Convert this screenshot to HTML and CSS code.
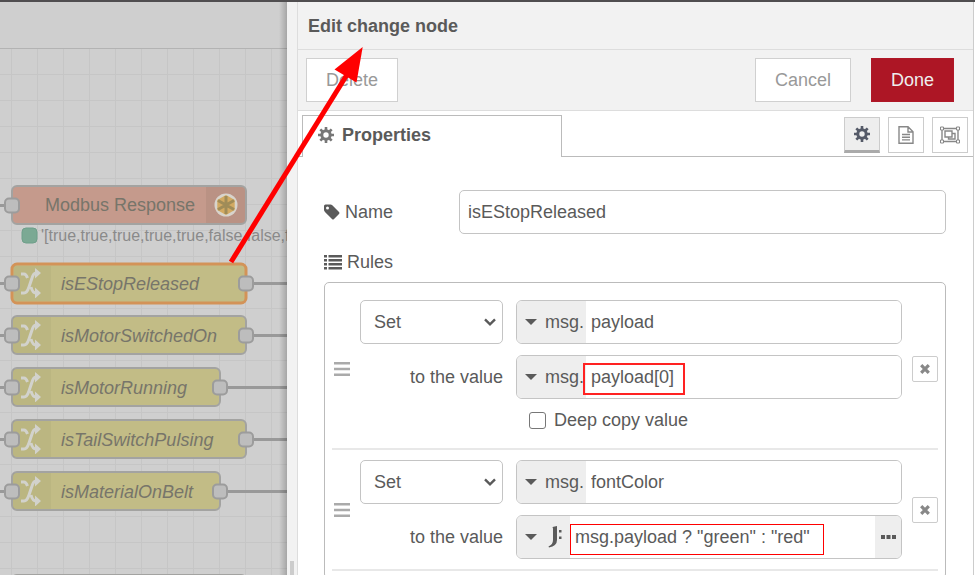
FILE: index.html
```html
<!DOCTYPE html>
<html lang="en">
<head>
<meta charset="utf-8">
<title>Edit change node</title>
<link rel="stylesheet" href="styles.css">
</head>
<body>
<svg class="symbols" aria-hidden="true">
  <defs>
    <symbol id="gear" viewBox="0 0 16 16">
      <path fill="none" stroke="currentColor" stroke-width="3" d="M8 3.8a4.2 4.2 0 1 0 0 8.400a4.200 4.200 0 1 0 0-8.400z"/>
      <path fill="none" stroke="currentColor" stroke-width="2.600" d="M8 0v3M8 13v3M0 8h3M13 8h3M2.300 2.300l2.200 2.200M11.500 11.500l2.200 2.200M2.300 13.700l2.200-2.200M11.500 4.500l2.200-2.200"/>
    </symbol>
    <symbol id="tag" viewBox="0 0 16 16">
      <path fill="currentColor" fill-rule="evenodd" d="M0 2Q0 .5 1.500 .5H6.500Q7.500.5 8.300 1.300L15 8Q16 9 15 10L10 15Q9 16 8 15L1.200 8.300Q0 7 0 6zM3.500 2.500a1.500 1.500 0 1 0 0 3a1.500 1.500 0 1 0 0-3z"/>
    </symbol>
    <symbol id="list" viewBox="0 0 18 16">
      <path fill="currentColor" d="M0 1h3v2.400H0zM4.500 1H18v2.400H4.500zM0 5h3v2.400H0zM4.500 5H18v2.400H4.500zM0 9h3v2.400H0zM4.500 9H18v2.400H4.500zM0 13h3v2.400H0zM4.500 13H18v2.400H4.500z"/>
    </symbol>
    <symbol id="doc" viewBox="0 0 16 18">
      <path fill="none" stroke="currentColor" stroke-width="1.400" d="M1 .8H10L15 5.800V17.200H1zM10 1v5h5M4 8.500h8M4 11.200h8M4 13.900h8"/>
    </symbol>
    <symbol id="group" viewBox="0 0 20 18">
      <path fill="none" stroke="currentColor" stroke-width="1.400" d="M2 2.500H18V15.500H2zM5 5h7v6H5zM12 7.500h3v5.500H8.500V11"/>
      <path fill="#fff" stroke="currentColor" d="M.5 1h3v3h-3zM16.500 1h3v3h-3zM.5 14h3v3h-3zM16.500 14h3v3h-3z"/>
    </symbol>
    <symbol id="chevron" viewBox="0 0 12 8">
      <path fill="none" stroke="currentColor" stroke-width="2.400" d="M1 1.300L6 6.300L11 1.300"/>
    </symbol>
    <symbol id="caret" viewBox="0 0 12 6"><path fill="currentColor" d="M0 0H12L6 6z"/></symbol>
    <symbol id="grip" viewBox="0 0 16 14">
      <path fill="currentColor" d="M0 0h16v2.500H0zM0 5.700h16v2.500H0zM0 11.400h16v2.500H0z"/>
    </symbol>
    <symbol id="cross" viewBox="0 0 10 10">
      <path stroke="currentColor" stroke-width="3.200" d="M1.200 1.200L8.800 8.800M8.800 1.200L1.200 8.800"/>
    </symbol>
    <symbol id="jsonata" viewBox="0 0 14 22">
      <path fill="currentColor" d="M4.500 1L9 0V14Q9 20 1 21.500L.5 20.500Q5 18.500 5 14V2.500zM11 4h2.500v2.500H11zM11 10.500h2.500v2.500H11z"/>
    </symbol>
    <symbol id="dots" viewBox="0 0 15 4">
      <path fill="currentColor" d="M0 0h4v4H0zM5.500 0h4v4h-4zM11 0h4v4h-4z"/>
    </symbol>
    <symbol id="shuffle" viewBox="0 0 20 30">
      <path fill="none" stroke="currentColor" stroke-width="3" d="M0 6H3Q5 6 6.500 10M0 25H3Q6 25 8 19L11 10Q12.500 5 15 5M10 19Q11.500 25 15 25"/>
      <path fill="currentColor" d="M14 0L20 5L14 10.500zM14 19.500L20 25L14 30.500z"/>
    </symbol>
  </defs>
</svg>

<div class="app">
  <header class="topbar"></header>
  <main class="main">
    <section class="workspace" aria-label="Flow">
      <div class="flow-tabs"></div>
      <svg class="flow" width="287" height="526" viewBox="0 49 287 526">
        <defs>
          <pattern id="grid" x="11" y="48" width="26" height="26" patternUnits="userSpaceOnUse">
            <path class="gridline" d="M0 .5H26M.5 0V26"/>
          </pattern>
        </defs>
        <rect y="48" width="287" height="527" fill="url(#grid)"/>
        <path class="wire" d="M0 205.500H12M0 283.500H12M0 335.500H12M0 387.500H12M0 439.500H12M0 491.500H12M246 283.500H287M246 335.500H287M220 387.500H287M246 439.500H287M220 491.500H287"/>

        <rect class="node modbus" x="12" y="186" width="234" height="38" rx="5"/>
        <path class="shade" d="M206 187H241Q245 187 245 191V219Q245 223 241 223H206z"/>
        <circle cx="226" cy="205" r="11.500" fill="#d8d4cc"/>
        <path d="M226 195L234.700 200V210L226 215L217.300 210V200z" fill="#d3aa62"/>
        <path d="M226 196V214M218 200.500L234 209.500M234 200.500L218 209.500" stroke="#a08c58" stroke-width="3"/>
        <text class="label" x="45" y="211">Modbus Response</text>
        <rect class="port" x="5" y="198.500" width="14" height="14" rx="4"/>
        <rect x="22" y="228" width="15" height="15" rx="4" fill="#7ba994" stroke="#6f9f8a"/>
        <text class="status" x="41" y="241">'[true,true,true,true,true,false,false,fa</text>

        <rect class="node change selected" x="12" y="264" width="234" height="39" rx="5"/>
        <rect class="node change" x="12" y="316" width="234" height="38" rx="5"/>
        <rect class="node change" x="12" y="368" width="208" height="38" rx="5"/>
        <rect class="node change" x="12" y="420" width="234" height="38" rx="5"/>
        <rect class="node change" x="12" y="472" width="208" height="38" rx="5"/>
        <rect class="node" x="12" y="575" width="234" height="38" rx="5"/>
        <path class="iconbg" d="M14 266H51V301H14zM13 317H51V353H13zM13 369H51V405H13zM13 421H51V457H13zM13 473H51V509H13z"/>
        <g class="shuffle">
          <use href="#shuffle" x="21" y="268" width="20" height="30"/>
          <use href="#shuffle" x="21" y="320" width="20" height="30"/>
          <use href="#shuffle" x="21" y="372" width="20" height="30"/>
          <use href="#shuffle" x="21" y="424" width="20" height="30"/>
          <use href="#shuffle" x="21" y="476" width="20" height="30"/>
        </g>
        <g class="label italic">
          <text x="61" y="290">isEStopReleased</text>
          <text x="61" y="342">isMotorSwitchedOn</text>
          <text x="61" y="394">isMotorRunning</text>
          <text x="61" y="446">isTailSwitchPulsing</text>
          <text x="61" y="498">isMaterialOnBelt</text>
        </g>
        <g class="port">
          <rect x="5" y="276.500" width="14" height="14" rx="4"/><rect x="239" y="276.500" width="14" height="14" rx="4"/>
          <rect x="5" y="328.500" width="14" height="14" rx="4"/><rect x="239" y="328.500" width="14" height="14" rx="4"/>
          <rect x="5" y="380.500" width="14" height="14" rx="4"/><rect x="213" y="380.500" width="14" height="14" rx="4"/>
          <rect x="5" y="432.500" width="14" height="14" rx="4"/><rect x="239" y="432.500" width="14" height="14" rx="4"/>
          <rect x="5" y="484.500" width="14" height="14" rx="4"/><rect x="213" y="484.500" width="14" height="14" rx="4"/>
        </g>
      </svg>
    </section>
    <div class="gutter"><span class="gutter-grip"></span></div>

    <section class="tray">
      <h1 class="tray-title">Edit change node</h1>
      <div class="toolbar">
        <button class="btn" type="button">Delete</button>
        <span class="spacer"></span>
        <button class="btn" type="button">Cancel</button>
        <button class="btn primary" type="button">Done</button>
      </div>
      <div class="tabs">
        <div class="tab"><svg class="i16"><use href="#gear"/></svg>Properties</div>
        <div class="tab-tools">
          <button class="tool active" type="button" aria-label="Properties"><svg class="i16"><use href="#gear"/></svg></button>
          <button class="tool" type="button" aria-label="Description"><svg class="i18"><use href="#doc"/></svg></button>
          <button class="tool" type="button" aria-label="Appearance"><svg class="i20"><use href="#group"/></svg></button>
        </div>
      </div>

      <form class="form">
        <div class="name-row">
          <label class="caption" for="name"><svg class="i16"><use href="#tag"/></svg>Name</label>
          <input class="text" id="name" type="text" value="isEStopReleased">
        </div>
        <div class="caption"><svg class="i18"><use href="#list"/></svg>Rules</div>
        <div class="rules">
          <div class="rule">
            <svg class="grip"><use href="#grip"/></svg>
            <div class="rule-body">
              <div class="select"><select aria-label="Action"><option>Set</option></select><svg class="chevron"><use href="#chevron"/></svg></div>
              <div class="typed">
                <button class="type" type="button"><svg class="caret"><use href="#caret"/></svg>msg.</button>
                <input type="text" aria-label="Property" value="payload">
              </div>
              <label class="to" for="v1">to the value</label>
              <div class="typed">
                <button class="type" type="button"><svg class="caret"><use href="#caret"/></svg>msg.</button>
                <input id="v1" type="text" value="payload[0]">
              </div>
              <label class="deep"><input type="checkbox">Deep copy value</label>
            </div>
            <button class="remove" type="button" aria-label="Remove rule"><svg class="cross"><use href="#cross"/></svg></button>
          </div>
          <div class="rule">
            <svg class="grip"><use href="#grip"/></svg>
            <div class="rule-body">
              <div class="select"><select aria-label="Action"><option>Set</option></select><svg class="chevron"><use href="#chevron"/></svg></div>
              <div class="typed">
                <button class="type" type="button"><svg class="caret"><use href="#caret"/></svg>msg.</button>
                <input type="text" aria-label="Property" value="fontColor">
              </div>
              <label class="to" for="v2">to the value</label>
              <div class="typed">
                <button class="type expr" type="button" aria-label="Expression"><svg class="caret"><use href="#caret"/></svg><svg class="jsonata"><use href="#jsonata"/></svg></button>
                <input id="v2" type="text" value="msg.payload ? &quot;green&quot; : &quot;red&quot;">
                <button class="more" type="button" aria-label="Open editor"><svg class="dots"><use href="#dots"/></svg></button>
              </div>
            </div>
            <button class="remove" type="button" aria-label="Remove rule"><svg class="cross"><use href="#cross"/></svg></button>
          </div>
        </div>
      </form>
    </section>
  </main>
  <svg class="marks" width="975" height="575" viewBox="0 0 975 575" aria-hidden="true">
    <path d="M231 262L348 73" stroke="#f00" stroke-width="5"/>
    <path d="M362.700 47L334.500 69.500L356.500 82.500z" fill="#f00"/>
    <rect x="584" y="364" width="100" height="30" fill="none" stroke="#f22" stroke-width="2"/>
    <rect x="570.500" y="524.500" width="253" height="30" fill="none" stroke="#f00"/>
  </svg>
</div>
</body>
</html>
```
FILE: styles.css
```css
* { box-sizing: border-box; }

body {
  margin: 0;
  color: #5a5a5a;
  background: #fff;
  font: 18px/24px "Liberation Sans", Arial, sans-serif;
}

button, input, select {
  margin: 0;
  font: inherit;
  color: inherit;
}

button { padding: 0; cursor: pointer; }
svg { display: block; flex: none; }
.symbols { position: absolute; width: 0; height: 0; }

.app {
  position: relative;
  display: flex;
  flex-direction: column;
  height: 100vh;
  overflow: hidden;
}

.topbar { flex: none; height: 2px; background: #504e50; }
.main { display: flex; flex: 1; min-height: 0; }

/* Flow canvas, dimmed behind the tray */
.workspace {
  position: relative;
  flex: none;
  overflow: hidden;
  background: #cfcfcf;
}
.workspace::after {
  content: "";
  position: absolute;
  inset: 0 0 0 auto;
  width: 8px;
  background: linear-gradient(to right, transparent, rgba(0, 0, 0, .2));
}
.flow-tabs { height: 47px; border-bottom: 1px solid #b3b3b3; }
.gridline { fill: none; stroke: #c6c6c6; stroke-width: 1; }
.wire { fill: none; stroke: #999; stroke-width: 3; }
.node { fill: #c2bc86; stroke: #a3a3a1; stroke-width: 2; }
.modbus { fill: #c59a8c; }
.selected { stroke: #d39358; stroke-width: 3; }
.shade { fill: rgba(0, 0, 0, .05); }
.iconbg { fill: rgba(0, 0, 0, .03); }
.port { fill: #bdbdbd; stroke: #9c9c9c; stroke-width: 2; }
.label { fill: #77756a; font-size: 18px; }
.italic { font-style: italic; }
.status { fill: #8a8a8a; font-size: 16px; }
.shuffle { color: #d2d2cc; }

.gutter {
  display: flex;
  flex: none;
  align-items: flex-end;
  justify-content: center;
  width: 10px;
  background: #f2f2f2;
}
.gutter-grip { width: 4px; height: 14px; background: #ccc; }

/* Edit tray */
.tray {
  display: flex;
  flex: 1;
  flex-direction: column;
  min-width: 0;
  margin-right: 1px;
  border-right: 1px solid #ccc;
  border-left: 1px solid #ddd;
}
.tray-title {
  flex: none;
  margin: 0;
  padding: 12px 10px 11px;
  border-bottom: 1px solid #ddd;
  background: #f2f2f2;
  font-size: 18px;
  line-height: 24px;
}
.toolbar {
  display: flex;
  flex: none;
  padding: 8px 19px 8px 8px;
  border-bottom: 1px solid #ddd;
  background: #f2f2f2;
}
.spacer { flex: 1; }
.btn {
  height: 44px;
  padding: 0 19px;
  border: 1px solid #d0d0d0;
  background: #fff;
  color: #999;
}
.primary { margin-left: 20px; border-color: #b01828; background: #ad1625; color: #eee; }

.tabs {
  display: flex;
  flex: none;
  align-items: flex-end;
  padding: 4px 0 0 4px;
  background: linear-gradient(#bbb, #bbb) bottom / 100% 1px no-repeat;
}
.tab {
  display: flex;
  gap: 8px;
  width: 260px;
  height: 42px;
  padding: 7px 15px;
  border: 1px solid #bbb;
  border-bottom: 0;
  background: #fff;
  font-weight: bold;
}
.tab svg { margin-top: 4px; color: #777; }
.tab-tools {
  display: flex;
  flex: 1;
  gap: 8px;
  justify-content: flex-end;
  padding: 0 5px 4px 0;
}
.tool {
  display: grid;
  place-items: center;
  width: 36px;
  height: 36px;
  border: 1px solid #ccc;
  background: #fff;
  color: #888;
}
.tool.active { border-bottom: 3px solid #aaa; background: #eee; color: #555a68; }

.i16 { width: 16px; height: 16px; }
.i18 { width: 18px; height: 18px; }
.i20 { width: 20px; height: 18px; }

.form {
  display: flex;
  flex: 1;
  flex-direction: column;
  min-height: 0;
  padding: 33px 27px 0 26px;
}
.caption { display: flex; gap: 5px; align-items: center; }
.name-row {
  display: grid;
  grid-template-columns: 135px 1fr;
  align-items: center;
  margin-bottom: 16px;
}
.text {
  width: 100%;
  height: 44px;
  padding: 0 8px;
  border: 1px solid #c4c4c4;
  border-radius: 5px;
}

.rules {
  flex: none;
  margin-top: 8px;
  padding: 7px;
  border: 1px solid #bbb;
  border-radius: 5px;
}
.rule {
  display: grid;
  grid-template-columns: 28px 1fr 26px;
  align-items: center;
  padding: 10px 0;
  border-bottom: 2px solid #e8e8e8;
}
.rule-body {
  display: grid;
  grid-template-columns: 143px 1fr;
  gap: 11px 13px;
  align-items: center;
  margin-right: 10px;
}
.grip { width: 16px; height: 14px; margin-left: 2px; color: #aaa; }

.select { position: relative; }
.select select {
  display: block;
  width: 100%;
  height: 44px;
  padding: 0 13px;
  border: 1px solid #c4c4c4;
  border-radius: 5px;
  background: #fff;
  appearance: none;
}
.chevron {
  position: absolute;
  top: 18px;
  right: 7px;
  width: 12px;
  height: 8px;
  pointer-events: none;
}
.to { text-align: right; }

.typed {
  display: flex;
  height: 44px;
  overflow: hidden;
  border: 1px solid #c4c4c4;
  border-radius: 6px;
}
.typed input { flex: 1; min-width: 0; padding: 0 5px; border: 0; background: #fff; }
.type, .more { display: flex; flex: none; align-items: center; border: 0; background: #eee; }
.type { gap: 8px; width: 69px; padding-left: 8px; }
.type.expr { gap: 11px; width: 53px; }
.more { justify-content: center; width: 26px; }
.caret { width: 12px; height: 6px; }
.jsonata { width: 14px; height: 22px; }
.dots { width: 15px; height: 4px; }

.deep {
  display: flex;
  grid-column: 2;
  gap: 8px;
  align-items: center;
  height: 28px;
  padding: 0 13px 8px;
}
.deep input {
  width: 17px;
  height: 17px;
  border: 1px solid #777;
  border-radius: 3px;
  background: #fff;
  appearance: none;
}
.remove {
  display: grid;
  place-items: center;
  width: 26px;
  height: 26px;
  border: 1px solid #ccc;
  border-radius: 2px;
  background: #fff;
  color: #888;
}
.cross { width: 10px; height: 10px; }

/* Callouts drawn over the page */
.marks { position: absolute; top: 0; left: 0; pointer-events: none; }
```
